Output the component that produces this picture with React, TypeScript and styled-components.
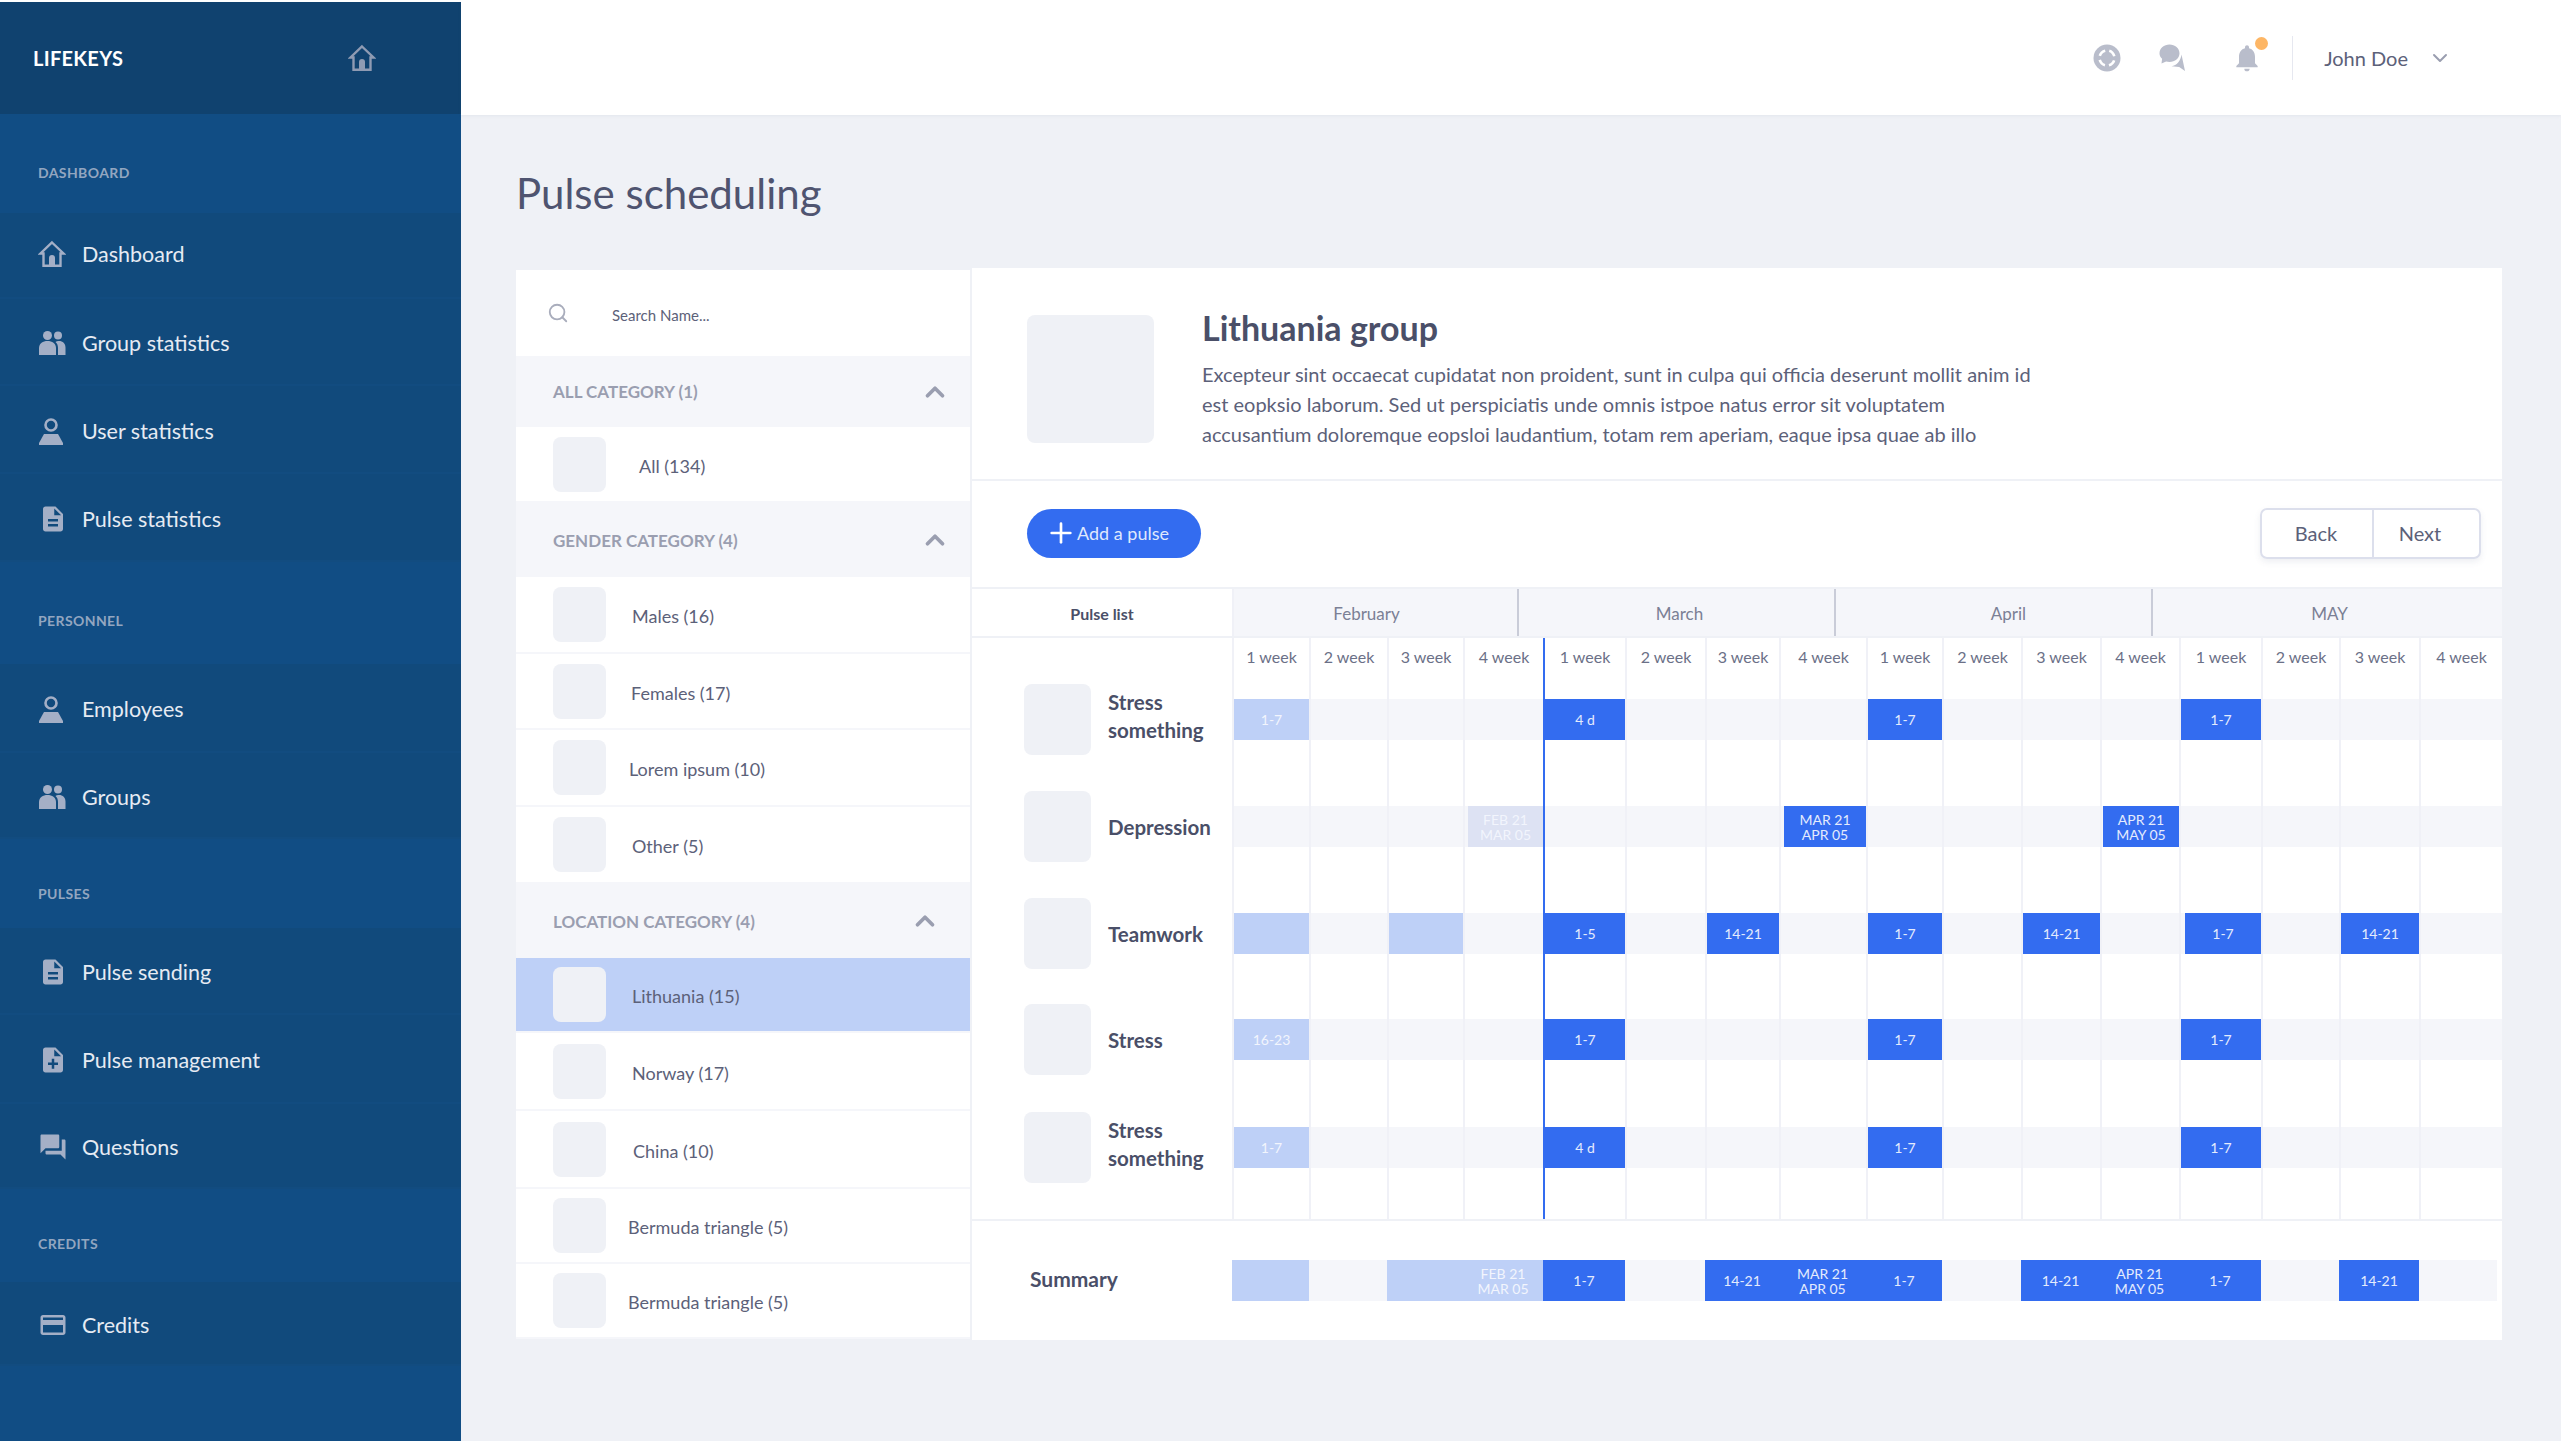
import React from "react";
import styled, { createGlobalStyle } from "styled-components";
import { ChevronDown, ChevronUp, Plus, Search } from "lucide-react";
import {
  MdCreditCard,
  MdDescription,
  MdForum,
  MdNoteAdd,
  MdNotifications,
} from "react-icons/md";

const FONT = `"Lato", "Noto Sans", sans-serif`;
const WEEK_COLUMNS = [77, 78, 76, 80, 82, 80, 74, 87, 76, 79, 79, 79, 82, 78, 80, 83];
const GRID = `260px ${WEEK_COLUMNS.map((w) => `${w}px`).join(" ")}`;

const GlobalStyle = createGlobalStyle`
  html, body {
    margin: 0;
    padding: 0;
    background: #eff1f6;
    font-family: ${FONT};
    color: #4a4f68;
  }
  * { box-sizing: border-box; }
`;

const Page = styled.div`
  display: flex;
  width: 2561px;
  height: 1441px;
  overflow: hidden;
`;

const Sidebar = styled.aside`
  width: 461px;
  flex: none;
  background: #114d84;
  border-top: 2px solid #fff;
`;

const Brand = styled.div`
  height: 112px;
  background: #10426f;
  display: flex;
  align-items: center;
  justify-content: space-between;
  padding: 0 85px 0 33px;
  color: #fff;
  font-size: 20px;
  font-weight: 700;
  letter-spacing: 0.3px;

  svg {
    color: #8f9bb3;
  }
`;

const NavLabel = styled.div<{ $h: number; $pb: number }>`
  height: ${({ $h }) => $h}px;
  padding: 0 0 ${({ $pb }) => $pb}px 38px;
  display: flex;
  align-items: flex-end;
  font-size: 14px;
  font-weight: 700;
  letter-spacing: 0.4px;
  color: #93a6c0;
`;

const NavItem = styled.div<{ $h: number; $pb: number }>`
  height: ${({ $h }) => $h}px;
  background: #114a7c;
  border-bottom: 2px solid #124c80;
  display: flex;
  align-items: center;
  padding: 3px 0 ${({ $pb }) => $pb}px 38px;
  font-size: 21.5px;
  color: #e6ebf3;
`;

const NavIcon = styled.span`
  width: 44px;
  flex: none;
  display: flex;
  color: #a4afc6;
`;

const Main = styled.main`
  flex: 1;
  min-width: 0;
  display: flex;
  flex-direction: column;
`;

const TopBar = styled.header`
  height: 115px;
  flex: none;
  background: #fff;
  box-shadow: 0 1px 3px rgba(90, 100, 140, 0.08);
  display: flex;
  align-items: center;
  justify-content: flex-end;
  padding: 0 109px 0 0;
  color: #b9bdcb;
`;

const TopIcon = styled.span<{ $ml: number }>`
  position: relative;
  display: flex;
  margin-left: ${({ $ml }) => $ml}px;
`;

const NoticeDot = styled.span`
  position: absolute;
  top: -5px;
  right: -5px;
  width: 13px;
  height: 13px;
  border-radius: 50%;
  background: #fdb665;
`;

const TopDivider = styled.span`
  width: 1px;
  height: 44px;
  background: #e6e8f0;
  margin: 0 31px 0 29px;
`;

const UserName = styled.span`
  font-size: 20px;
  color: #5c6179;
  margin-right: 20px;
`;

const Content = styled.div`
  flex: 1;
  padding: 0 59px 0 55px;
  min-height: 0;
`;

const PageTitle = styled.h1`
  height: 153px;
  margin: 0;
  padding-top: 50px;
  font-size: 42px;
  line-height: 56px;
  font-weight: 400;
  color: #4f5470;
`;

const Columns = styled.div`
  display: flex;
  align-items: flex-start;
`;

const ListPanel = styled.section`
  width: 456px;
  flex: none;
  margin-top: 2px;
  background: #fff;
  border-right: 2px solid #eff1f6;
`;

const SearchRow = styled.div`
  height: 86px;
  display: flex;
  align-items: center;
  padding: 3px 0 0 31px;
  font-size: 15px;
  color: #5c6179;

  svg {
    color: #a9adbc;
    margin: -3px 43px 0 0;
  }
`;

const CategoryHead = styled.div<{ $h: number; $pr: number }>`
  height: ${({ $h }) => $h}px;
  background: #f5f6fa;
  display: flex;
  align-items: center;
  justify-content: space-between;
  padding: 0 ${({ $pr }) => $pr}px 0 37px;
  font-size: 17px;
  font-weight: 700;
  color: #9a9eb0;

  svg {
    color: #9a9eb0;
  }
`;

const ListRow = styled.div<{ $h: number; $selected?: boolean }>`
  height: ${({ $h }) => $h}px;
  display: flex;
  align-items: center;
  padding-left: 37px;
  font-size: 18px;
  color: #5c6179;
  background: ${({ $selected }) => ($selected ? "#bed0f7" : "#fff")};
  border-bottom: 2px solid #f5f6fa;
`;

const ListThumb = styled.span`
  width: 53px;
  height: 55px;
  flex: none;
  border-radius: 8px;
  background: #eff1f6;
`;

const ListText = styled.span<{ $ml: number }>`
  margin-left: ${({ $ml }) => $ml}px;
  padding-top: 3px;
`;

const DetailPanel = styled.section`
  flex: 1;
  min-width: 0;
  background: #fff;
  height: 1072px;
`;

const GroupInfo = styled.div`
  height: 213px;
  border-bottom: 2px solid #eff1f6;
  display: flex;
  align-items: flex-start;
  padding: 47px 0 0 55px;
`;

const GroupThumb = styled.div`
  width: 127px;
  height: 128px;
  flex: none;
  border-radius: 8px;
  background: #eff1f6;
`;

const GroupText = styled.div`
  margin-left: 48px;
`;

const GroupTitle = styled.h2`
  margin: -8px 0 10px;
  font-size: 34px;
  line-height: 42px;
  font-weight: 700;
  color: #4a4f68;
`;

const GroupBody = styled.p`
  margin: 0;
  width: 850px;
  font-size: 20px;
  line-height: 30px;
  color: #5c6179;
`;

const Toolbar = styled.div`
  height: 106px;
  display: flex;
  align-items: center;
  justify-content: space-between;
  padding: 0 21px 2px 55px;
`;

const AddButton = styled.button`
  width: 174px;
  height: 49px;
  border: 0;
  border-radius: 25px;
  background: #336cf0;
  color: #dfe8fd;
  font-family: ${FONT};
  font-size: 18px;
  display: flex;
  align-items: center;
  justify-content: flex-start;
  padding: 0 0 0 18px;
  gap: 0;

  svg {
    color: #fff;
  }
`;

const Pager = styled.div`
  display: flex;
  width: 221px;
  height: 51px;
  border: 2px solid #dcdfec;
  border-radius: 7px;
  box-shadow: 0 3px 6px rgba(90, 100, 140, 0.1);
`;

const PagerButton = styled.button<{ $w: number; $divider?: boolean; $pr: number }>`
  width: ${({ $w }) => $w}px;
  border: 0;
  border-right: ${({ $divider }) => ($divider ? "2px solid #dcdfec" : "0")};
  padding: 0 ${({ $pr }) => $pr}px 0 0;
  background: transparent;
  font-family: ${FONT};
  font-size: 20px;
  color: #5c6179;
`;

const MonthRow = styled.div`
  display: grid;
  grid-template-columns: 260px 285px 317px 317px 351px;
  height: 51px;
  border-top: 2px solid #eff1f6;
  border-bottom: 2px solid #eff1f6;
`;

const PulseListLabel = styled.div`
  display: flex;
  align-items: center;
  justify-content: center;
  padding-top: 2px;
  font-size: 16px;
  font-weight: 700;
  color: #4a4f68;
`;

const Month = styled.div<{ $first?: boolean; $pl: number; $pr: number }>`
  display: flex;
  align-items: center;
  justify-content: center;
  padding: 2px ${({ $pr }) => $pr}px 0 ${({ $pl }) => $pl}px;
  background: #f5f6fa;
  font-size: 17px;
  color: #7b8095;
  border-left: ${({ $first }) => ($first ? "2px solid #f0f1f7" : "2px solid #c9ccd8")};
`;

const WeekGrid = styled.div<{ $h: number }>`
  display: grid;
  grid-template-columns: ${GRID};
  height: ${({ $h }) => $h}px;
`;

const WeekLabel = styled.div<{ $today?: boolean }>`
  display: flex;
  align-items: center;
  justify-content: center;
  padding-bottom: 4px;
  font-size: 16px;
  color: #6b7087;
  border-left: 2px solid ${({ $today }) => ($today ? "#336cf0" : "#f0f1f7")};
`;

const RowHead = styled.div`
  display: flex;
  align-items: flex-start;
  padding: 6px 0 0 52px;
`;

const RowThumb = styled.div`
  width: 67px;
  height: 71px;
  flex: none;
  border-radius: 8px;
  background: #eff1f6;
`;

const RowName = styled.div<{ $h: number }>`
  height: ${({ $h }) => $h}px;
  display: flex;
  align-items: center;
  margin-left: 17px;
  font-size: 20.5px;
  line-height: 28px;
  font-weight: 700;
  color: #4a4f68;
`;

const Cell = styled.div<{ $today?: boolean }>`
  padding-top: 21px;
  border-left: 2px solid ${({ $today }) => ($today ? "#336cf0" : "#f0f1f7")};
`;

const Band = styled.div`
  height: 41px;
  display: flex;
  background: #f5f6fa;
`;

type PillKind = "dark" | "light" | "pale";

const PILL_COLORS: Record<PillKind, string> = {
  dark: "#336cf0",
  light: "#bed0f7",
  pale: "#dde2f3",
};

const Pill = styled.div<{ $kind: PillKind; $inset: number }>`
  flex: 1;
  margin-left: ${({ $inset }) => $inset}px;
  display: flex;
  align-items: center;
  justify-content: center;
  text-align: center;
  background: ${({ $kind }) => PILL_COLORS[$kind]};
  color: ${({ $kind }) => ($kind === "dark" ? "#e4ebfd" : "#f2f5fd")};
  font-size: 14px;
  line-height: 15px;
  white-space: pre-line;
`;

const SummaryRow = styled.div`
  display: grid;
  grid-template-columns: ${GRID};
  height: 117px;
  padding-top: 39px;
  border-top: 2px solid #eff1f6;
`;

const SummaryLabel = styled.div`
  height: 41px;
  display: flex;
  align-items: center;
  padding: 0 0 4px 58px;
  font-size: 21px;
  font-weight: 700;
  color: #4a4f68;
`;

const SummaryCell = styled.div<{ $mr: number }>`
  height: 41px;
  display: flex;
  margin-right: ${({ $mr }) => $mr}px;
  background: #f5f6fa;
`;

const HouseIcon = () => (
  <svg width="28" height="28" viewBox="0 0 28 28" fill="none" stroke="currentColor" strokeWidth="2.4">
    <path d="M14 2.500 25.500 13.500H22.500V25.800H5.500V13.500H2.500Z" strokeLinejoin="miter" />
    <path d="M11 26V18a3 3 0 0 1 6 0v8z" fill="currentColor" stroke="none" />
  </svg>
);

const GroupIcon = () => (
  <svg width="28" height="26" viewBox="0 0 28 26" fill="currentColor">
    <circle cx="9.500" cy="5.500" r="4.500" />
    <circle cx="20" cy="5.500" r="4" />
    <path d="M1 25v-7c0-4.500 4-7 8.500-7S18 13.500 18 18v7z" />
    <path d="M20 25v-7c0-2.500-.8-4.700-2.500-6 1-.6 2-1 3.500-1 3.800 0 6.500 2.500 6.500 6.500V25z" />
  </svg>
);

const UserIcon = () => (
  <svg width="26" height="28" viewBox="0 0 26 28" fill="currentColor">
    <circle cx="13" cy="8" r="5.500" fill="none" stroke="currentColor" strokeWidth="2.600" />
    <path d="M6 17h14l5 9v2H1v-2z" />
  </svg>
);

const RingIcon = () => (
  <svg width="28" height="28" viewBox="0 0 28 28">
    <circle cx="14" cy="14" r="13.500" fill="currentColor" />
    <circle
      cx="14"
      cy="14"
      r="7.500"
      fill="none"
      stroke="#fff"
      strokeWidth="2.600"
      strokeDasharray="7.800 4"
      strokeDashoffset="3.900"
      transform="rotate(45 14 14)"
    />
  </svg>
);

const ChatIcon = () => (
  <svg width="28" height="28" viewBox="0 0 28 28" fill="currentColor">
    <path d="M11.500 0.500c5.500 0 10 3.900 10 8.800s-4.500 8.700-10 8.700c-1.200 0-2.300-.2-3.400-.5L3.500 19.500l.6-4.700C2.300 13.300 1.500 11.400 1.500 9.300c0-4.900 4.500-8.800 10-8.800z" />
    <path d="M23.500 10.500 27 27l-5.800-4-7.700-.7c5.200-.6 9.300-5.600 10-11.800z" />
  </svg>
);

const navGroups = [
  {
    label: "DASHBOARD",
    h: 99,
    pb: 32,
    items: [
      { text: "Dashboard", h: 86, pb: 6 },
      { text: "Group statistics", h: 87, pb: 0 },
      { text: "User statistics", h: 88, pb: 0 },
      { text: "Pulse statistics", h: 88, pb: 0 },
    ],
  },
  {
    label: "PERSONNEL",
    h: 102,
    pb: 35,
    items: [
      { text: "Employees", h: 89, pb: 0 },
      { text: "Groups", h: 86, pb: 0 },
    ],
  },
  {
    label: "PULSES",
    h: 89,
    pb: 26,
    items: [
      { text: "Pulse sending", h: 87, pb: 0 },
      { text: "Pulse management", h: 89, pb: 0 },
      { text: "Questions", h: 85, pb: 0 },
    ],
  },
  {
    label: "CREDITS",
    h: 93,
    pb: 30,
    items: [{ text: "Credits", h: 84, pb: 0 }],
  },
];

const navIcons: Record<string, React.ReactNode> = {
  Dashboard: <HouseIcon />,
  "Group statistics": <GroupIcon />,
  "User statistics": <UserIcon />,
  "Pulse statistics": <MdDescription size={30} />,
  Employees: <UserIcon />,
  Groups: <GroupIcon />,
  "Pulse sending": <MdDescription size={30} />,
  "Pulse management": <MdNoteAdd size={30} />,
  Questions: <MdForum size={30} />,
  Credits: <MdCreditCard size={30} />,
};

const categories = [
  {
    title: "ALL CATEGORY (1)",
    h: 71,
    pr: 20,
    rows: [{ text: "All (134)", h: 76, ml: 33 }],
  },
  {
    title: "GENDER CATEGORY (4)",
    h: 74,
    pr: 20,
    rows: [
      { text: "Males (16)", h: 77, ml: 26 },
      { text: "Females (17)", h: 76, ml: 25 },
      { text: "Lorem ipsum (10)", h: 77, ml: 23 },
      { text: "Other (5)", h: 77, ml: 26 },
    ],
  },
  {
    title: "LOCATION CATEGORY (4)",
    h: 74,
    pr: 30,
    rows: [
      { text: "Lithuania (15)", h: 75, ml: 26, selected: true },
      { text: "Norway (17)", h: 78, ml: 26 },
      { text: "China (10)", h: 78, ml: 27 },
      { text: "Bermuda triangle (5)", h: 75, ml: 22 },
      { text: "Bermuda triangle (5)", h: 75, ml: 22 },
    ],
  },
];

type PillSpec = { kind: PillKind; text?: string; inset?: number };

const FEB = "FEB 21\nMAR 05";
const MAR = "MAR 21\nAPR 05";
const APR = "APR 21\nMAY 05";

const pulses: { name: React.ReactNode; nameH: number; h: number; pills: Record<number, PillSpec> }[] = [
  {
    name: <>Stress<br />something</>,
    nameH: 63,
    h: 107,
    pills: {
      0: { kind: "light", text: "1-7" },
      4: { kind: "dark", text: "4 d" },
      8: { kind: "dark", text: "1-7" },
      12: { kind: "dark", text: "1-7" },
    },
  },
  {
    name: "Depression",
    nameH: 71,
    h: 107,
    pills: {
      3: { kind: "pale", text: FEB, inset: 3 },
      7: { kind: "dark", text: MAR, inset: 3 },
      11: { kind: "dark", text: APR, inset: 1 },
    },
  },
  {
    name: "Teamwork",
    nameH: 71,
    h: 106,
    pills: {
      0: { kind: "light" },
      2: { kind: "light" },
      4: { kind: "dark", text: "1-5" },
      6: { kind: "dark", text: "14-21" },
      8: { kind: "dark", text: "1-7" },
      10: { kind: "dark", text: "14-21" },
      12: { kind: "dark", text: "1-7", inset: 4 },
      14: { kind: "dark", text: "14-21" },
    },
  },
  {
    name: "Stress",
    nameH: 71,
    h: 108,
    pills: {
      0: { kind: "light", text: "16-23" },
      4: { kind: "dark", text: "1-7" },
      8: { kind: "dark", text: "1-7" },
      12: { kind: "dark", text: "1-7" },
    },
  },
  {
    name: <>Stress<br />something</>,
    nameH: 63,
    h: 113,
    pills: {
      0: { kind: "light", text: "1-7" },
      4: { kind: "dark", text: "4 d" },
      8: { kind: "dark", text: "1-7" },
      12: { kind: "dark", text: "1-7" },
    },
  },
];

const summary: Record<number, PillSpec> = {
  0: { kind: "light" },
  2: { kind: "light" },
  3: { kind: "light", text: FEB },
  4: { kind: "dark", text: "1-7" },
  6: { kind: "dark", text: "14-21" },
  7: { kind: "dark", text: MAR },
  8: { kind: "dark", text: "1-7" },
  10: { kind: "dark", text: "14-21" },
  11: { kind: "dark", text: APR },
  12: { kind: "dark", text: "1-7" },
  14: { kind: "dark", text: "14-21" },
};

const TODAY_COLUMN = 4;

export default function App() {
  return (
    <Page>
      <GlobalStyle />
      <Sidebar>
        <Brand>
          LIFEKEYS
          <HouseIcon />
        </Brand>
        {navGroups.map((group) => (
          <div key={group.label}>
            <NavLabel $h={group.h} $pb={group.pb}>
              {group.label}
            </NavLabel>
            {group.items.map((item) => (
              <NavItem key={item.text} $h={item.h} $pb={item.pb}>
                <NavIcon>{navIcons[item.text]}</NavIcon>
                {item.text}
              </NavItem>
            ))}
          </div>
        ))}
      </Sidebar>

      <Main>
        <TopBar>
          <TopIcon $ml={0}>
            <RingIcon />
          </TopIcon>
          <TopIcon $ml={37}>
            <ChatIcon />
          </TopIcon>
          <TopIcon $ml={45}>
            <MdNotifications size={32} />
            <NoticeDot />
          </TopIcon>
          <TopDivider />
          <UserName>John Doe</UserName>
          <ChevronDown size={24} color="#9a9eb0" />
        </TopBar>

        <Content>
          <PageTitle>Pulse scheduling</PageTitle>
          <Columns>
            <ListPanel>
              <SearchRow>
                <Search size={22} />
                Search Name...
              </SearchRow>
              {categories.map((category) => (
                <div key={category.title}>
                  <CategoryHead $h={category.h} $pr={category.pr}>
                    {category.title}
                    <ChevronUp size={30} strokeWidth={3} />
                  </CategoryHead>
                  {category.rows.map((row, i) => (
                    <ListRow key={i} $h={row.h} $selected={"selected" in row}>
                      <ListThumb />
                      <ListText $ml={row.ml}>{row.text}</ListText>
                    </ListRow>
                  ))}
                </div>
              ))}
            </ListPanel>

            <DetailPanel>
              <GroupInfo>
                <GroupThumb />
                <GroupText>
                  <GroupTitle>Lithuania group</GroupTitle>
                  <GroupBody>
                    Excepteur sint occaecat cupidatat non proident, sunt in culpa qui officia deserunt mollit anim id
                    est eopksio laborum. Sed ut perspiciatis unde omnis istpoe natus error sit voluptatem
                    accusantium doloremque eopsloi laudantium, totam rem aperiam, eaque ipsa quae ab illo
                  </GroupBody>
                </GroupText>
              </GroupInfo>

              <Toolbar>
                <AddButton>
                  <Plus size={32} strokeWidth={2} />
                  Add a pulse
                </AddButton>
                <Pager>
                  <PagerButton $w={112} $pr={2} $divider>Back</PagerButton>
                  <PagerButton $w={105} $pr={13}>Next</PagerButton>
                </Pager>
              </Toolbar>

              <MonthRow>
                <PulseListLabel>Pulse list</PulseListLabel>
                <Month $first $pl={0} $pr={18}>February</Month>
                <Month $pl={6} $pr={0}>March</Month>
                <Month $pl={30} $pr={0}>April</Month>
                <Month $pl={4} $pr={0}>MAY</Month>
              </MonthRow>

              <WeekGrid $h={40}>
                <div />
                {WEEK_COLUMNS.map((_, i) => (
                  <WeekLabel key={i} $today={i === TODAY_COLUMN}>
                    {(i % 4) + 1} week
                  </WeekLabel>
                ))}
              </WeekGrid>

              {pulses.map((pulse, r) => (
                <WeekGrid key={r} $h={pulse.h}>
                  <RowHead>
                    <RowThumb />
                    <RowName $h={pulse.nameH}>
                      <span>{pulse.name}</span>
                    </RowName>
                  </RowHead>
                  {WEEK_COLUMNS.map((_, i) => {
                    const pill = pulse.pills[i];
                    return (
                      <Cell key={i} $today={i === TODAY_COLUMN}>
                        <Band>
                          {pill && (
                            <Pill $kind={pill.kind} $inset={pill.inset ?? 0}>
                              {pill.text}
                            </Pill>
                          )}
                        </Band>
                      </Cell>
                    );
                  })}
                </WeekGrid>
              ))}

              <SummaryRow>
                <SummaryLabel>Summary</SummaryLabel>
                {WEEK_COLUMNS.map((_, i) => {
                  const pill = summary[i];
                  return (
                    <SummaryCell key={i} $mr={i === WEEK_COLUMNS.length - 1 ? 5 : 0}>
                      {pill && (
                        <Pill $kind={pill.kind} $inset={0}>
                          {pill.text}
                        </Pill>
                      )}
                    </SummaryCell>
                  );
                })}
              </SummaryRow>
            </DetailPanel>
          </Columns>
        </Content>
      </Main>
    </Page>
  );
}
